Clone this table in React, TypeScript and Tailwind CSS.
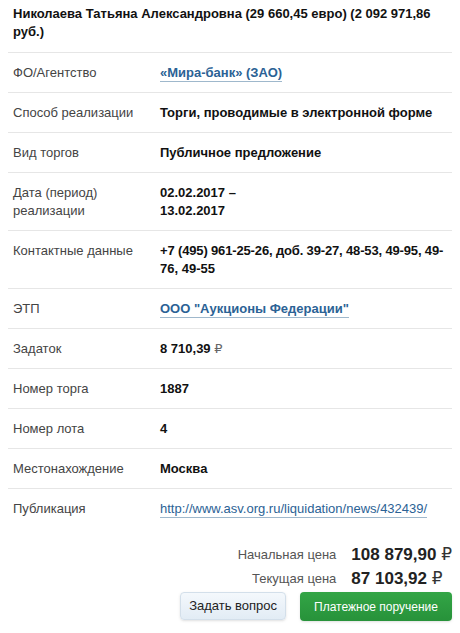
const Rub: React.FC<{ dark?: boolean }> = ({ dark }) => (
  <span
    className={`font-[family-name:DejaVu_Sans,sans-serif] font-normal ${
      dark ? "text-[#333]" : "text-[#666]"
    }`}
  >
    ₽
  </span>
);

const rows: { label: string; value: React.ReactNode; link?: "bold" | "plain" }[] = [
  { label: "ФО/Агентство", value: "«Мира-банк» (ЗАО)", link: "bold" },
  { label: "Способ реализации", value: "Торги, проводимые в электронной форме" },
  { label: "Вид торгов", value: "Публичное предложение" },
  {
    label: "Дата (период) реализации",
    value: (
      <>
        02.02.2017 –<br />
        13.02.2017
      </>
    ),
  },
  {
    label: "Контактные данные",
    value: (
      <>
        <span className="whitespace-nowrap tracking-[-0.15px]">
          +7 (495) 961-25-26, доб. 39-27, 48-53, 49-95, 49-
        </span>
        <br />
        76, 49-55
      </>
    ),
  },
  { label: "ЭТП", value: 'ООО "Аукционы Федерации"', link: "bold" },
  {
    label: "Задаток",
    value: (
      <>
        8 710,39 <Rub />
      </>
    ),
  },
  { label: "Номер торга", value: "1887" },
  { label: "Номер лота", value: "4" },
  { label: "Местонахождение", value: "Москва" },
  {
    label: "Публикация",
    value: "http://www.asv.org.ru/liquidation/news/432439/",
    link: "plain",
  },
];

const App: React.FC = () => {
  return (
    <div className="min-h-[633px] w-[460px] bg-white font-[family-name:Liberation_Sans,Arial,sans-serif] text-[13px] text-[#111]">
      <div className="px-[8px]">
        <h1 className="px-[5px] pt-[5px] pb-[11px] text-[13px] font-bold leading-[18px] text-[#111]">
          Николаева Татьяна Александровна (29 660,45 евро) (2 092 971,86 руб.)
        </h1>
        {rows.map((row) => (
          <div
            key={row.label}
            className="flex border-t border-[#e6e6e6] px-[5px] py-[10.5px] leading-[18px]"
          >
            <div className="w-[147px] shrink-0 pr-3 text-[#444]">{row.label}</div>
            <div className="flex-1">
              {row.link === "bold" && (
                <span className="border-b border-[#9fb8cc] pb-[1px] font-bold text-[#2b6295]">
                  {row.value}
                </span>
              )}
              {row.link === "plain" && (
                <span className="border-b border-[#9fb8cc] pb-[1px] text-[#2b6295]">
                  {row.value}
                </span>
              )}
              {!row.link && <span className="font-bold">{row.value}</span>}
            </div>
          </div>
        ))}
      </div>
      <div className="mt-[15px] flex flex-col items-end pr-[8px]">
        <div className="grid grid-cols-[auto_auto] items-center gap-x-[15px] gap-y-[1px]">
          <span className="text-right text-[13px] text-[#555]">Начальная цена</span>
          <span className="text-[17px] font-bold leading-[22px] text-[#222]">
            108 879,90 <Rub dark />
          </span>
          <span className="text-right text-[13px] text-[#555]">Текущая цена</span>
          <span className="text-[17px] font-bold leading-[22px] text-[#222]">
            87 103,92 <Rub dark />
          </span>
        </div>
        <div className="mt-[2px] flex gap-[14px]">
          <button className="h-[28px] rounded-[4px] border border-[#d3dfea] bg-gradient-to-b from-[#f4f8fc] to-[#e2ecf5] px-[8px] text-[13px] text-[#222] shadow-sm">
            Задать вопрос
          </button>
          <button className="h-[29px] rounded-[4px] bg-gradient-to-b from-[#33a546] to-[#27923a] px-[14px] text-[12px] text-white shadow-sm">
            Платежное поручение
          </button>
        </div>
      </div>
    </div>
  );
};

export default App;
